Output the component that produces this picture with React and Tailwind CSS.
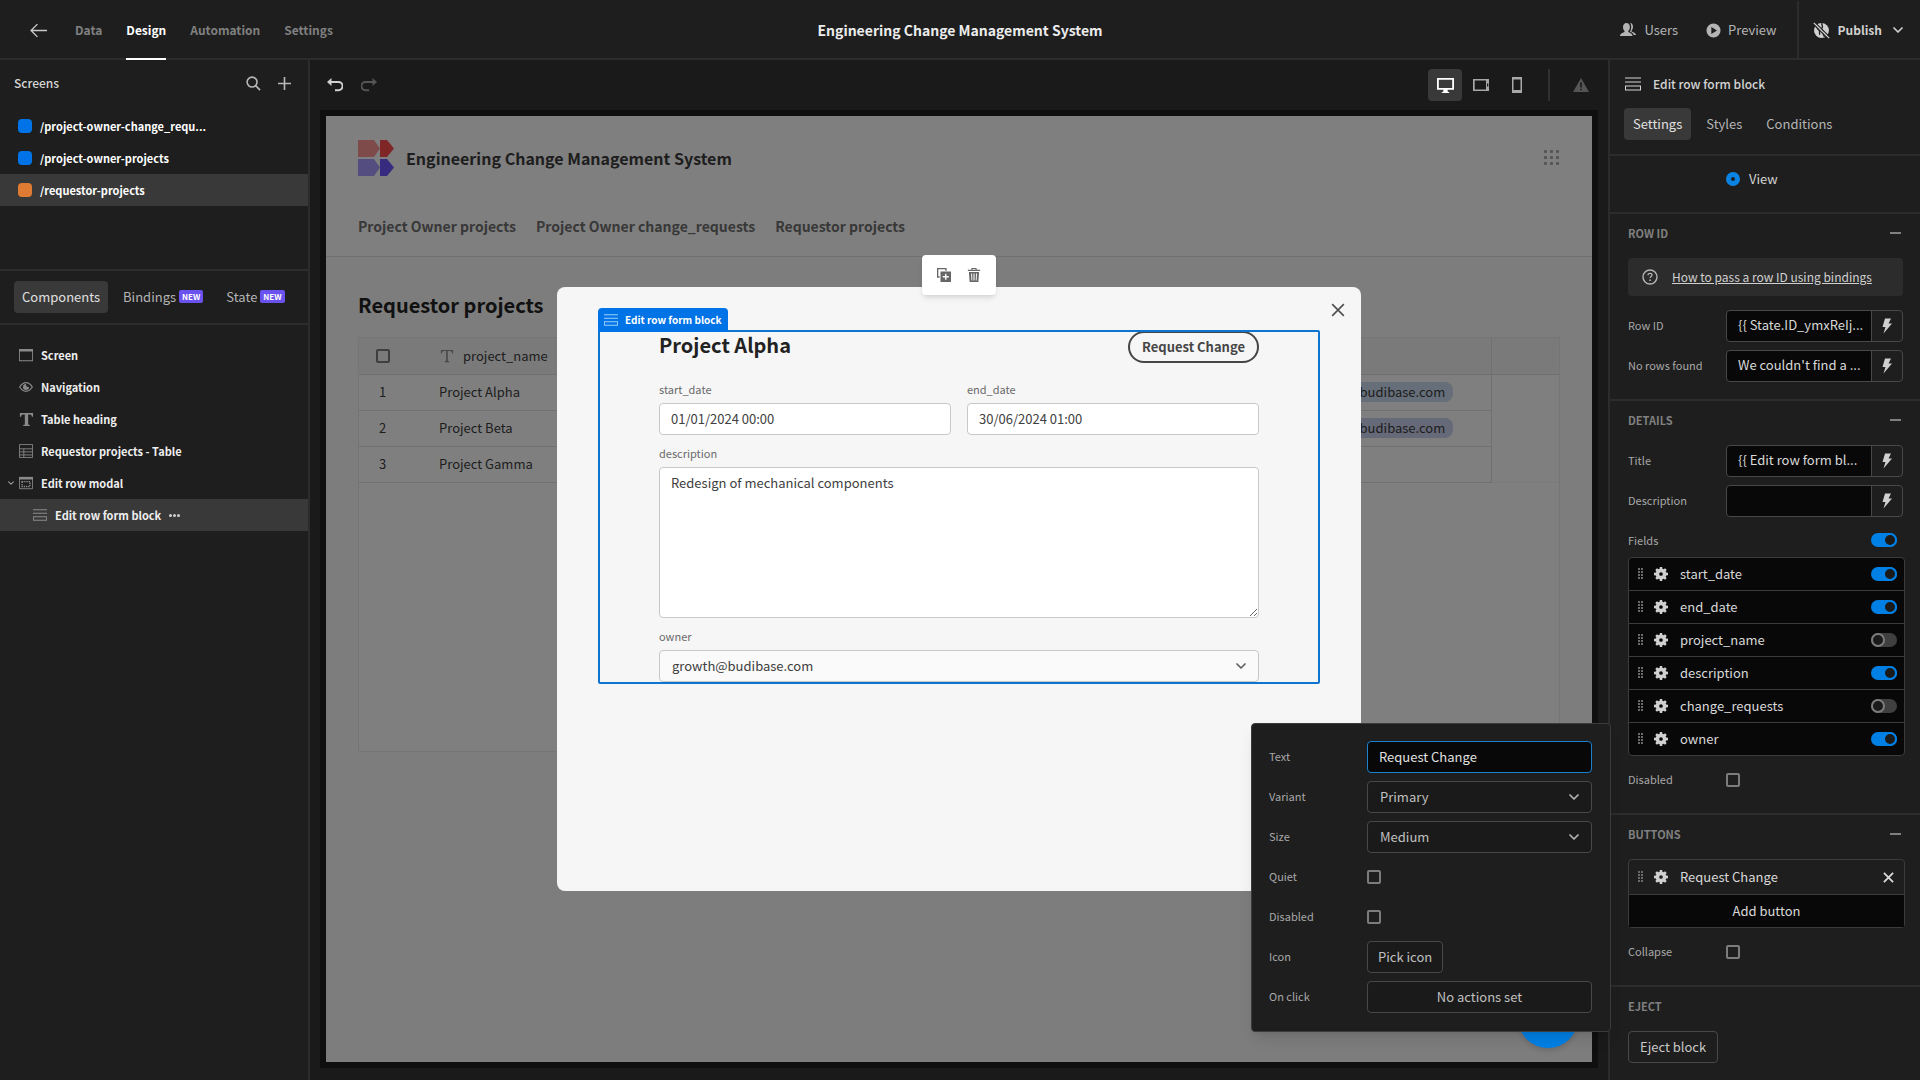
import React, { useState } from 'react';

const screens = [
    { path: '/project-owner-change_requ...', color: 'bg-[#0073e6]' },
    { path: '/project-owner-projects', color: 'bg-[#0073e6]' },
    { path: '/requestor-projects', color: 'bg-[#e07b34]', active: true },
];

const rows = [
    { id: 1, name: 'Project Alpha', owner: 'growth@budibase.com', pill: 'bg-[#ccdcf2]' },
    { id: 2, name: 'Project Beta', owner: 'growth@budibase.com', pill: 'bg-[#ccd3f0]' },
    { id: 3, name: 'Project Gamma' },
];

const Icon = ({ size = 16, className = '', children, viewBox = '0 0 16 16' }) => (
    <svg width={size} height={size} viewBox={viewBox} fill="currentColor" className={`shrink-0 ${className}`} aria-hidden="true">
        {children}
    </svg>
);

const FormIcon = ({ size, className }) => (
    <Icon size={size} className={className}>
        <path d="M0 1.5h16v1H0zM0 5.5h16v1H0zM0 9.5h16v5H0zm1 1v3h14v-3z" fillRule="evenodd" />
    </Icon>
);

const TextIcon = ({ size, className }) => (
    <Icon size={size} className={className}>
        <path d="M1 1h14v4h-1.3c-.2-1.5-.8-2.300-2.200-2.300H9.800v10.100c0 .7.4.9 1.700 1V15h-7v-1.200c1.300-.1 1.700-.3 1.700-1V2.700H4.500C3.100 2.700 2.500 3.500 2.300 5H1z" />
    </Icon>
);

// Thinner letter used in the table header
const ColumnTextIcon = () => (
    <Icon size={14} className="mx-px text-[#909090]">
        <path d="M1 1h14v4h-1.200c-.2-1.700-.9-2.600-2.300-2.600H8.900v10.500c0 .7.400 1 1.600 1.100v1h-5v-1c1.200-.1 1.600-.4 1.600-1.100V2.400H4.500C3.100 2.400 2.400 3.300 2.200 5H1z" />
    </Icon>
);

const GearIcon = () => (
    <Icon size={14} className="text-[#d0d0d0]">
        <path fillRule="evenodd" d="M6.700 0h2.600l.3 2.100 1.400.6L12.700 1.500l1.800 1.800L13.300 5l.6 1.400 2.100.3v2.600l-2.100.3-.6 1.400 1.200 1.700-1.800 1.800L11 13.300l-1.400.6-.3 2.100H6.700l-.3-2.100-1.400-.6-1.700 1.200-1.800-1.800L2.700 11l-.6-1.400L0 9.300V6.700l2.100-.3L2.700 5 1.500 3.300l1.800-1.800L5 2.700l1.400-.6zM8 5.900a2.100 2.100 0 1 0 0 4.200 2.100 2.100 0 0 0 0-4.200z" />
    </Icon>
);

const ChevronIcon = ({ size = 10, className }) => (
    <Icon size={size} viewBox="0 0 10 10" className={className}>
        <path d="M1 3l4 4 4-4" fill="none" stroke="currentColor" strokeWidth="1.700" strokeLinecap="round" strokeLinejoin="round" />
    </Icon>
);

const CloseIcon = ({ size, className, width = 1.5 }) => (
    <Icon size={size} viewBox="0 0 12 12" className={className}>
        <path d="M1 1l10 10M11 1L1 11" fill="none" stroke="currentColor" strokeWidth={width} />
    </Icon>
);

const BoltIcon = () => (
    <Icon size={16} className="text-[#d0d0d0]">
        <path d="M6 .5h6L9.500 5.500h3.500L4.500 15.500l2-6.500H3.500z" />
    </Icon>
);

const DragIcon = () => (
    <svg width="6" height="12" viewBox="0 0 6 12" fill="#6a6a6a" className="shrink-0" aria-hidden="true">
        {[0, 3, 6, 9].map((y) => (
            <React.Fragment key={y}>
                <rect x="0" y={y} width="2" height="2" />
                <rect x="3" y={y} width="2" height="2" />
            </React.Fragment>
        ))}
    </svg>
);

const Toggle = ({ label, on }) => {
    const [checked, setChecked] = useState(on);
    return (
        <input
            type="checkbox"
            role="switch"
            aria-label={label}
            checked={checked}
            onChange={(e) => setChecked(e.target.checked)}
            className="appearance-none shrink-0 flex w-[26px] h-[14px] rounded-full bg-[#404040] checked:bg-[#0080e5] checked:justify-end before:block before:size-[14px] before:rounded-full before:border-2 before:border-[#7c7c7c] before:bg-[#1a1a1a] checked:before:border-[#0080e5]"
        />
    );
};

const Checkbox = ({ id }) => (
    <input id={id} type="checkbox" className="appearance-none block size-[14px] rounded-xs border-2 border-[#7c7c7c]" />
);

const Header = () => (
    <header className="grid grid-cols-[1fr_auto_1fr] h-[60px] shrink-0 border-b-2 border-[#2c2c2c]">
        <nav className="flex items-center gap-6 pl-[30px] h-[60px] text-[12px] font-semibold text-[#808080]">
            <button type="button" aria-label="Back" className="mr-1 text-[#c8c8c8]">
                <Icon size={17}>
                    <path d="M7 2L1 8l6 6M1 8h15" fill="none" stroke="currentColor" strokeWidth="1.300" />
                </Icon>
            </button>
            <a href="#data">Data</a>
            <a href="#design" className="flex items-center h-[60px] border-y-2 border-t-transparent border-b-white text-white">Design</a>
            <a href="#automation">Automation</a>
            <a href="#settings">Settings</a>
        </nav>
        <h1 className="self-center text-[14px] font-semibold text-[#ececec]">Engineering Change Management System</h1>
        <div className="flex items-center justify-end text-[13px] text-[#b4b4b4]">
            <button type="button" className="flex items-center gap-2 mr-7">
                <Icon size={16}>
                    <path d="M6.500 1C8.700 1 9.900 2.700 9.900 5c0 1.700-.8 3.300-1.600 4.100v1c1.300.8 4.200 1.500 4.200 3.900H0c0-2.400 3.200-3.200 4.500-3.900v-1C3.700 8.300 3 6.700 3 5c0-2.300 1.300-4 3.500-4z" />
                    <path d="M10.200.8c1.700.3 2.800 1.900 2.800 3.900 0 1.600-.6 3-1.400 3.700v1c1.300.7 4.400 1.300 4.400 3.600h-2.300c-.4-2-2.500-2.900-3.900-3.500.8-1 1.400-2.700 1.400-4.500 0-1.700-.3-3.100-1-4.200z" />
                </Icon>
                Users
            </button>
            <button type="button" className="flex items-center gap-[7px] mr-5">
                <Icon size={15}>
                    <path fillRule="evenodd" d="M8 .5a7.500 7.500 0 1 0 0 15 7.500 7.500 0 0 0 0-15zM5.700 4.300l6 3.700-6 3.700z" />
                </Icon>
                Preview
            </button>
            <button type="button" className="flex items-center gap-2 h-[58px] pl-[14px] pr-[17px] border-l-2 border-[#2c2c2c] text-[12px] font-semibold text-[#d0d0d0]">
                <Icon size={17}>
                    <circle cx="8" cy="8" r="7" />
                    <path d="M8.500 1c-1 2 1.500 3 0 4.500S10 8 9.500 10s1.500 2 1 4M3 4.500c1.500 1 1 2 2.500 3s0 3 1 4.500" fill="none" stroke="#1e1e1e" strokeWidth="1.300" />
                    <path d="M0 1.500L14.500 16M1.500 0L16 14.500" fill="none" stroke="#1e1e1e" strokeWidth="1.200" />
                    <path d="M.8.8l14.400 14.400" fill="none" stroke="currentColor" strokeWidth="1.200" />
                </Icon>
                Publish
                <ChevronIcon className="ml-[3px]" />
            </button>
        </div>
    </header>
);

const NewBadge = () => (
    <span className="px-[3px] rounded-xs bg-[#6a52ee] text-[8px] leading-[13px] font-bold text-white">NEW</span>
);

const TreeItem = ({ icon, label }) => (
    <li className="flex items-center gap-2 h-8 pl-[19px]">
        {icon}
        {label}
    </li>
);

const LeftPanel = () => (
    <aside className="flex flex-col w-[310px] shrink-0 border-r-2 border-[#2c2c2c]">
        <div className="flex items-center h-[46px] pl-[14px] pr-[17px] text-[#b8b8b8]">
            <h2 className="flex-1 text-[12px] font-medium text-[#d4d4d4]">Screens</h2>
            <button type="button" aria-label="Search" className="mr-[17px]">
                <Icon size={15}>
                    <path d="M6.500 1.200a5.300 5.300 0 1 0 0 10.600 5.300 5.300 0 0 0 0-10.600zM10.500 10.500l4.500 4.500" fill="none" stroke="currentColor" strokeWidth="1.700" />
                </Icon>
            </button>
            <button type="button" aria-label="Add screen">
                <Icon size={13}>
                    <path d="M7 0h2v7h7v2H9v7H7V9H0V7h7z" />
                </Icon>
            </button>
        </div>
        <ul className="h-[163px] pt-1 text-[11px] font-bold text-white">
            {screens.map((s) => (
                <li key={s.path} className={`flex items-center gap-2 h-8 pl-[18px] ${s.active ? 'bg-[#393939]' : ''}`}>
                    <span className={`size-[14px] rounded-sm ${s.color}`} />
                    {s.path}
                </li>
            ))}
        </ul>
        <div className="flex items-center gap-[7px] h-[56px] pb-px px-[14px] border-y-2 border-[#2c2c2c] text-[13px] text-[#b4b4b4]">
            <button type="button" className="h-8 px-2 rounded-sm bg-[#393939] text-[#e0e0e0]">Components</button>
            <button type="button" className="flex items-center gap-[3px] h-8 px-2">Bindings <NewBadge /></button>
            <button type="button" className="flex items-center gap-[3px] h-8 px-2">State <NewBadge /></button>
        </div>
        <ul className="pt-[14px] text-[11px] font-bold text-[#efefef]">
            <TreeItem
                label="Screen"
                icon={
                    <Icon size={14} className="text-[#8a8a8a]">
                        <path fillRule="evenodd" d="M0 1h16v14H0zm1 3v10h14V4z" />
                    </Icon>
                }
            />
            <TreeItem
                label="Navigation"
                icon={
                    <Icon size={14} className="text-[#8a8a8a]">
                        <path d="M.8 8C3 4.500 5.500 3 8 3s5 1.500 7.200 5C13 11.500 10.500 13 8 13S3 11.500.8 8z" fill="none" stroke="currentColor" strokeWidth="1.400" />
                        <path d="M8 4.500a3.500 3.500 0 1 0 3.500 3.500L8.500 7.500z" />
                    </Icon>
                }
            />
            <TreeItem label="Table heading" icon={<TextIcon size={15} className="-mr-px text-[#8a8a8a]" />} />
            <TreeItem
                label="Requestor projects - Table"
                icon={
                    <Icon size={14} className="text-[#8a8a8a]">
                        <path d="M.5.5h15v15H.5zM.5 5.500h15M.5 9h15M.5 12.500h15M5.500 5.500v10" fill="none" stroke="currentColor" />
                    </Icon>
                }
            />
            <li className="flex items-center gap-2 h-8 pl-2">
                <ChevronIcon size={6} className="-mr-[3px] text-[#a0a0a0]" />
                <Icon size={14} className="text-[#8a8a8a]">
                    <path d="M0 1h16v3H0z" />
                    <path d="M.5 3v11.500h15V3" fill="none" stroke="currentColor" />
                    <path d="M3.500 6.500h9v5.500h-9z" fill="none" stroke="currentColor" strokeDasharray="1.500 1" strokeWidth="1.500" />
                </Icon>
                Edit row modal
            </li>
            <li className="flex items-center gap-2 h-8 pl-[33px] bg-[#393939]">
                <FormIcon size={14} className="text-[#8a8a8a]" />
                Edit row form block
                <button type="button" aria-label="More" className="flex gap-px">
                    <span className="size-[3px] rounded-full bg-[#d0d0d0]" />
                    <span className="size-[3px] rounded-full bg-[#d0d0d0]" />
                    <span className="size-[3px] rounded-full bg-[#d0d0d0]" />
                </button>
            </li>
        </ul>
    </aside>
);

const CanvasToolbar = () => (
    <div className="flex items-center h-[50px] pl-[17px] pr-[19px] text-[#a8a8a8]">
        <button type="button" aria-label="Undo" className="mr-[18px] text-[#d0d0d0]">
            <Icon size={16}>
                <path d="M4.500 1v8L0 5z" />
                <path d="M4 5h7.500a3.500 3.500 0 0 1 0 8.200H8" fill="none" stroke="currentColor" strokeWidth="2" />
            </Icon>
        </button>
        <button type="button" aria-label="Redo" className="text-[#555555]">
            <Icon size={16}>
                <path d="M11.500 1v8L16 5z" />
                <path d="M12 5H4.500a3.500 3.500 0 0 0 0 8.200H8" fill="none" stroke="currentColor" strokeWidth="2" />
            </Icon>
        </button>
        <div className="flex items-center ml-auto">
            <button type="button" aria-label="Desktop" className="flex items-center justify-center w-[34px] h-8 rounded-sm bg-[#393939] text-white">
                <Icon size={17}>
                    <path fillRule="evenodd" d="M0 1h16v11H10v1.500l2 1.500H4l2-1.500V12H0zm1.700 1.700v7.600h12.600V2.700z" />
                </Icon>
            </button>
            <button type="button" aria-label="Tablet" className="ml-[11px]">
                <Icon size={16}>
                    <path fillRule="evenodd" d="M0 2h16v12H0zm1.700 1.500v9h11.300v-9zM14 6.500v3h1.300v-3z" />
                </Icon>
            </button>
            <button type="button" aria-label="Phone" className="ml-5">
                <Icon size={16}>
                    <path fillRule="evenodd" d="M3 0h10v16H3zm1.500 2.500v10.500h7V2.500z" />
                </Icon>
            </button>
        </div>
        <div className="w-[2px] h-8 mx-[23px] bg-[#303030]" />
        <Icon size={16} className="text-[#555555]">
            <path fillRule="evenodd" d="M8 1l8 14H0zM7.200 5.500v5h1.600v-5zm0 6.200v1.600h1.600v-1.600z" />
        </Icon>
    </div>
);

const AppPreview = () => (
    <div className="h-full bg-[#fafafa] text-[#3c3c3c]">
        <div className="h-[141px] pt-6 px-8 border-b border-[#e0e0e0] bg-white">
            <div className="flex items-center h-9">
                <svg width="36" height="36" viewBox="0 0 36 36" aria-hidden="true">
                    <path d="M0 0h16l6 8.500-6 8.500H0z" fill="#ff9595" />
                    <path d="M22 0h7l7 8.500-7 8.500h-7z" fill="#ff4e4e" />
                    <path d="M0 19h16l6 8.500-6 8.500H0z" fill="#a89aff" />
                    <path d="M22 19h7l7 8.500-7 8.500h-7z" fill="#6e56ff" />
                </svg>
                <h2 className="ml-3 text-[16px] font-semibold">Engineering Change Management System</h2>
                <svg width="16" height="16" viewBox="0 0 16 16" fill="#a8a8a8" className="ml-auto" aria-hidden="true">
                    {[0, 6, 12].map((y) => [0, 6, 12].map((x) => <rect key={`${x}-${y}`} x={x} y={y} width="3" height="3" rx="1" />))}
                </svg>
            </div>
            <nav className="flex gap-5 pt-10 text-[14px] font-semibold text-[#707070]">
                <a href="#owner-projects">Project Owner projects</a>
                <a href="#owner-requests">Project Owner change_requests</a>
                <a href="#requestor-projects">Requestor projects</a>
            </nav>
        </div>
        <div className="px-8 pt-8">
            <h2 className="text-[20px] leading-8 font-semibold text-[#222222]">Requestor projects</h2>
            <div className="h-[415px] mt-4 border border-[#ebebeb] bg-white text-[13px]">
                <div className="bg-[#f5f5f5]">
                    <table className="w-full table-fixed border-collapse">
                        <colgroup>
                            <col className="w-[70px]" />
                            <col />
                            <col className="w-[200px]" />
                            <col className="w-[68px]" />
                        </colgroup>
                        <thead>
                            <tr className="h-9 border-b border-[#e0e0e0] text-left">
                                <th className="pl-[17px]">
                                    <input type="checkbox" aria-label="Select all" className="appearance-none block size-[14px] rounded-xs border-2 border-[#7c7c7c]" />
                                </th>
                                <th className="px-[10px] font-normal">
                                    <span className="flex items-center gap-2">
                                        <ColumnTextIcon />
                                        project_name
                                    </span>
                                </th>
                                <th className="border-r border-[#e0e0e0]" />
                                <th />
                            </tr>
                        </thead>
                        <tbody>
                            {rows.map((r) => (
                                <tr key={r.id} className="h-9 bg-white">
                                    <td className="pl-[20px] border-b border-[#e0e0e0]">{r.id}</td>
                                    <td className="px-[10px] border-b border-[#e0e0e0]">{r.name}</td>
                                    <td className="px-[5px] border-b border-r border-[#e0e0e0]">
                                        {r.owner && <span className={`px-2 rounded-lg leading-5 inline-block ${r.pill}`}>{r.owner}</span>}
                                    </td>
                                    <td />
                                </tr>
                            ))}
                        </tbody>
                    </table>
                </div>
            </div>
        </div>
    </div>
);

const FormField = ({ id, label, children }) => (
    <div className="flex-1">
        <label htmlFor={id} className="block pb-1 text-[11px] leading-5 text-[#6a6a6a]">{label}</label>
        {children}
    </div>
);

const EditRowModal = () => {
    const [start, setStart] = useState('01/01/2024 00:00');
    const [end, setEnd] = useState('30/06/2024 01:00');
    const [description, setDescription] = useState('Redesign of mechanical components');

    return (
        <div role="dialog" aria-label="Edit row" className="relative w-[804px] h-[604px] pt-[43px] px-[41px] rounded-lg bg-[#f6f6f6]">
            <div className="absolute -top-8 left-1/2 -translate-x-1/2 flex items-center gap-4 h-10 px-[15px] rounded-sm bg-white text-[#666666] shadow-md">
                <button type="button" aria-label="Duplicate">
                    <Icon size={14}>
                        <path d="M0 0h11v3H9.500V1.500h-8v8H3V11H0z" />
                        <path fillRule="evenodd" d="M4 4h12v12H4zm5.200 2.500v2.700H6.500v1.600h2.700v2.700h1.600v-2.700h2.700V9.200h-2.700V6.500z" />
                    </Icon>
                </button>
                <button type="button" aria-label="Delete">
                    <Icon size={14}>
                        <path fillRule="evenodd" d="M5 2V0h6v2h4v1.500H1V2zm1.300 0h3.400v-.8H6.300zM2.200 4.500h11.600L13 16H3zm2.500 1.700l.4 8h1l-.3-8zm2.700 0v8h1.200v-8zm2.900 0l-.3 8h1l.4-8z" />
                    </Icon>
                </button>
            </div>
            <button type="button" aria-label="Close" className="absolute top-4 right-4 text-[#505050]">
                <CloseIcon size={14} width={1.400} />
            </button>
            <div className="relative h-[354px]">
                <div className="absolute -top-[22px] left-0 z-10 flex items-center gap-[7px] h-6 px-[6px] rounded-t-sm bg-[#0073e6] text-[10px] font-bold text-white">
                    <FormIcon size={14} className="text-[#9ad0ff]" />
                    Edit row form block
                </div>
                <form className="h-full pt-px px-[61px] overflow-hidden" onSubmit={(e) => e.preventDefault()}>
                    <div className="flex items-start justify-between mb-4">
                        <h2 className="text-[20px] leading-7 font-semibold text-[#222222]">Project Alpha</h2>
                        <button type="submit" className="h-8 px-3 rounded-full border-2 border-[#464646] text-[13px] font-bold text-[#464646]">Request Change</button>
                    </div>
                    <div className="flex flex-col gap-2 text-[13px] text-[#404040]">
                        <div className="flex gap-4">
                            <FormField id="start_date" label="start_date">
                                <input id="start_date" value={start} onChange={(e) => setStart(e.target.value)} className="block w-full h-8 px-[11px] pb-[2px] rounded-sm border border-[#c8c8c8] bg-white" />
                            </FormField>
                            <FormField id="end_date" label="end_date">
                                <input id="end_date" value={end} onChange={(e) => setEnd(e.target.value)} className="block w-full h-8 px-[11px] pb-[2px] rounded-sm border border-[#c8c8c8] bg-white" />
                            </FormField>
                        </div>
                        <FormField id="description" label="description">
                            <textarea id="description" value={description} onChange={(e) => setDescription(e.target.value)} className="block w-full h-[151px] px-[11px] py-[5px] leading-5 rounded-sm border border-[#c8c8c8] bg-white" />
                        </FormField>
                        <FormField id="owner" label="owner">
                            <div className="relative">
                                <select id="owner" className="appearance-none block w-full h-8 px-3 rounded-sm border border-[#c8c8c8] bg-[#fafafa]">
                                    <option>growth@budibase.com</option>
                                </select>
                                <ChevronIcon className="absolute top-[11px] right-[13px] text-[#606060]" />
                            </div>
                        </FormField>
                    </div>
                </form>
                <div className="absolute inset-0 rounded-xs border-2 border-[#0f73d0] pointer-events-none" />
            </div>
        </div>
    );
};

const Canvas = () => (
    <main className="flex flex-col flex-1 min-w-0 bg-[#1a1a1a]">
        <CanvasToolbar />
        <div className="relative flex-1 min-h-0 mx-[10px] mb-3 border-6 border-[#0f0f0f] overflow-hidden">
            <AppPreview />
            <div className="absolute inset-0 flex items-center justify-center bg-black/50">
                <EditRowModal />
            </div>
            <button type="button" aria-label="Help" className="absolute right-[14px] bottom-[14px] size-[60px] rounded-full bg-[#0080e5] shadow-md" />
        </div>
    </main>
);

const Section = ({ title, collapsible, children }) => (
    <section className="pl-[18px] pr-[17px] pb-[17px] border-b-2 border-[#2c2c2c] last:border-b-0">
        <div className="flex items-center justify-between h-[38px] mb-[6px]">
            <h3 className="text-[11px] font-semibold text-[#808080]">{title}</h3>
            {collapsible && (
                <button type="button" aria-label={`Collapse ${title}`} className="px-[2px] py-2">
                    <span className="block w-[11px] h-[2px] bg-[#808080]" />
                </button>
            )}
        </div>
        <div className="flex flex-col gap-2">{children}</div>
    </section>
);

const SettingRow = ({ id, label, children }) => (
    <div className="flex items-center h-8">
        <label htmlFor={id} className="w-[98px] shrink-0 pb-[2px] text-[11px] text-[#a8a8a8]">{label}</label>
        {children}
    </div>
);

const BindingInput = ({ id, initial = '' }) => {
    const [value, setValue] = useState(initial);
    return (
        <div className="flex flex-1 min-w-0 h-8 rounded-sm border border-[#484848]">
            <input id={id} value={value} onChange={(e) => setValue(e.target.value)} className="flex-1 min-w-0 pl-[11px] pb-[2px] rounded-l-sm bg-[#080808] text-[13px] text-[#d8d8d8]" />
            <button type="button" aria-label="Bindings" className="flex items-center justify-center w-[31px] border-l border-[#484848]">
                <BoltIcon />
            </button>
        </div>
    );
};

const fields = [
    { name: 'start_date', on: true },
    { name: 'end_date', on: true },
    { name: 'project_name', on: false },
    { name: 'description', on: true },
    { name: 'change_requests', on: false },
    { name: 'owner', on: true },
];

const RightPanel = () => (
    <aside className="flex flex-col w-[312px] shrink-0 border-l-2 border-[#2c2c2c]">
        <div className="shrink-0 h-[96px] border-b-2 border-[#2c2c2c]">
            <div className="flex items-center gap-3 h-12 pl-[15px] text-[#d4d4d4]">
                <FormIcon size={16} />
                <h2 className="text-[12px] font-medium">Edit row form block</h2>
            </div>
            <div className="flex gap-[6px] pl-[14px] text-[13px] text-[#b4b4b4]">
                <button type="button" className="h-8 px-[9px] rounded-sm bg-[#393939] text-[#e0e0e0]">Settings</button>
                <button type="button" className="h-8 px-[9px]">Styles</button>
                <button type="button" className="h-8 px-[9px]">Conditions</button>
            </div>
        </div>
        <div className="flex-1 min-h-0 overflow-hidden">
            <div className="pt-[7px] pb-[17px] pl-[116px] border-b-2 border-[#2c2c2c]">
                <label className="flex items-center gap-[9px] h-8 text-[13px] text-[#d4d4d4]">
                    <input type="radio" name="type" defaultChecked className="appearance-none size-[14px] rounded-full border-5 border-[#0a84e4]" />
                    View
                </label>
            </div>
            <Section title="ROW ID" collapsible>
                <div className="flex items-center gap-[14px] h-[38px] mb-[6px] px-[14px] rounded-sm bg-[#2c2c2c]">
                    <Icon size={16} className="text-[#b4b4b4]">
                        <circle cx="8" cy="8" r="7" fill="none" stroke="currentColor" strokeWidth="1.400" />
                        <path d="M6 6.300c0-1.200.8-1.900 2-1.900s2 .7 2 1.700c0 1.400-1.900 1.500-1.900 3" fill="none" stroke="currentColor" strokeWidth="1.300" />
                        <circle cx="8.100" cy="11.200" r=".9" />
                    </Icon>
                    <a href="#bindings" className="text-[12px] text-[#d0d0d0] underline">How to pass a row ID using bindings</a>
                </div>
                <SettingRow id="row-id" label="Row ID">
                    <BindingInput id="row-id" initial="{{ State.ID_ymxReIj..." />
                </SettingRow>
                <SettingRow id="no-rows" label="No rows found">
                    <BindingInput id="no-rows" initial="We couldn't find a ..." />
                </SettingRow>
            </Section>
            <Section title="DETAILS" collapsible>
                <SettingRow id="title" label="Title">
                    <BindingInput id="title" initial="{{ Edit row form bl..." />
                </SettingRow>
                <SettingRow id="details-description" label="Description">
                    <BindingInput id="details-description" />
                </SettingRow>
                <div>
                    <div className="flex items-center justify-between h-8 pb-[2px] pr-[6px]">
                        <span className="text-[11px] text-[#a8a8a8]">Fields</span>
                        <Toggle label="All fields" on />
                    </div>
                    <ul className="-mr-[2px] rounded-sm border border-[#3c3c3c] bg-[#080808] divide-y divide-[#3c3c3c] text-[13px] text-[#d8d8d8]">
                        {fields.map((f) => (
                            <li key={f.name} className="flex items-center box-content h-8 pl-[9px] pr-[7px]">
                                <DragIcon />
                                <button type="button" aria-label={`${f.name} settings`} className="ml-[10px] mr-3">
                                    <GearIcon />
                                </button>
                                <span className="flex-1">{f.name}</span>
                                <Toggle label={f.name} on={f.on} />
                            </li>
                        ))}
                    </ul>
                </div>
                <SettingRow id="block-disabled" label="Disabled">
                    <Checkbox id="block-disabled" />
                </SettingRow>
            </Section>
            <Section title="BUTTONS" collapsible>
                <div className="-mr-[2px] rounded-sm border border-[#3c3c3c] text-[13px] text-[#d8d8d8]">
                    <div className="flex items-center h-[34px] pl-[9px] pr-[10px]">
                        <DragIcon />
                        <button type="button" aria-label="Button settings" className="ml-[10px] mr-3">
                            <GearIcon />
                        </button>
                        <span className="flex-1">Request Change</span>
                        <button type="button" aria-label="Remove button">
                            <CloseIcon size={11} width={2} />
                        </button>
                    </div>
                    <button type="button" className="block w-full h-[33px] border-t border-[#3c3c3c] bg-[#080808]">Add button</button>
                </div>
                <SettingRow id="collapse" label="Collapse">
                    <Checkbox id="collapse" />
                </SettingRow>
            </Section>
            <Section title="EJECT">
                <button type="button" className="self-start h-8 px-[11px] rounded-sm border border-[#484848] text-[13px] text-[#c8c8c8]">Eject block</button>
            </Section>
        </div>
    </aside>
);

const PopoverSelect = ({ id, value }) => (
    <div className="relative flex-1">
        <select id={id} className="appearance-none block w-full h-8 px-3 rounded-sm border border-[#484848] bg-[#1a1a1a]">
            <option>{value}</option>
        </select>
        <ChevronIcon className="absolute top-[11px] right-[13px] text-[#b4b4b4]" />
    </div>
);

const ButtonPopover = () => {
    const [text, setText] = useState('Request Change');
    return (
        <div className="absolute right-[309px] bottom-12 flex flex-col gap-2 w-[360px] pt-[17px] pb-[18px] pl-[17px] pr-[18px] rounded-sm border border-[#3c3c3c] bg-[#1e1e1e] shadow-lg text-[13px] text-[#c0c0c0]">
            <SettingRow id="button-text" label="Text">
                <input id="button-text" value={text} onChange={(e) => setText(e.target.value)} className="flex-1 h-8 px-[11px] pb-[2px] rounded-sm border border-[#1a80d0] bg-[#080808] text-[#e0e0e0]" />
            </SettingRow>
            <SettingRow id="variant" label="Variant">
                <PopoverSelect id="variant" value="Primary" />
            </SettingRow>
            <SettingRow id="size" label="Size">
                <PopoverSelect id="size" value="Medium" />
            </SettingRow>
            <SettingRow id="quiet" label="Quiet">
                <Checkbox id="quiet" />
            </SettingRow>
            <SettingRow id="button-disabled" label="Disabled">
                <Checkbox id="button-disabled" />
            </SettingRow>
            <SettingRow id="pick-icon" label="Icon">
                <button id="pick-icon" type="button" className="h-8 px-[10px] rounded-sm border border-[#484848] bg-[#1a1a1a]">Pick icon</button>
            </SettingRow>
            <SettingRow id="on-click" label="On click">
                <button id="on-click" type="button" className="flex-1 h-8 rounded-sm border border-[#484848] bg-[#1a1a1a]">No actions set</button>
            </SettingRow>
        </div>
    );
};

const App = () => (
    <div className="relative flex flex-col h-screen overflow-hidden bg-[#1e1e1e] font-['Noto_Sans_CJK_SC',sans-serif] leading-5">
        <Header />
        <div className="flex flex-1 min-h-0">
            <LeftPanel />
            <Canvas />
            <RightPanel />
        </div>
        <ButtonPopover />
    </div>
);

export default App;
